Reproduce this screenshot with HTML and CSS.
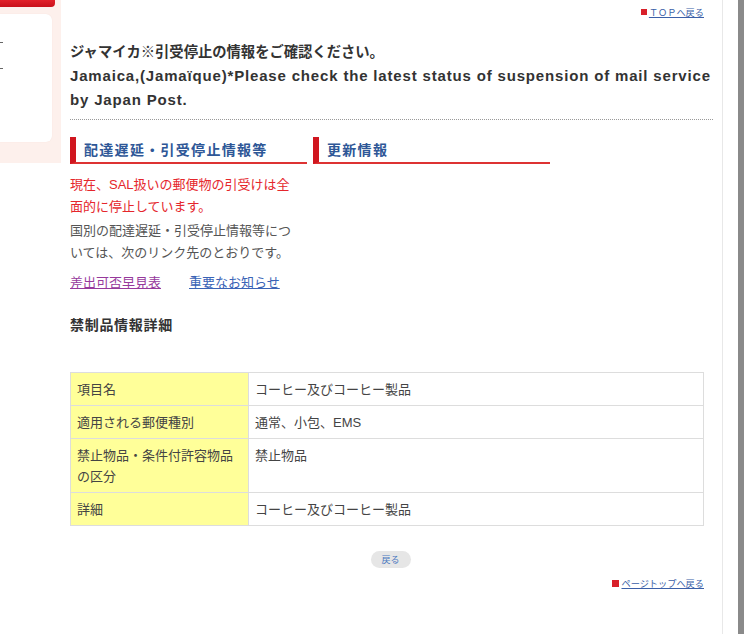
FILE: index.html
```html
<!DOCTYPE html>
<html lang="ja">
<head>
<meta charset="utf-8">
<title>ジャマイカ 禁制品情報</title>
<link rel="stylesheet" href="styles.css">
</head>
<body>
<div class="page">
  <aside class="sidebar">
    <div class="side-bar-red"></div>
    <div class="side-box">
      <span class="cut-mark"></span>
      <span class="cut-mark"></span>
    </div>
  </aside>
  <main class="main">
    <div class="toplink-row"><a class="toplink" href="#"><span class="sq"></span>ＴＯＰへ戻る</a></div>
    <h1 class="title">ジャマイカ※引受停止の情報をご確認ください。<br><span class="title-en">Jamaica,(Jamaïque)*Please check the latest status of suspension of mail service by Japan Post.</span></h1>
    <div class="dotted"></div>
    <div class="cols">
      <section class="col">
        <h2 class="sec-head">配達遅延・引受停止情報等</h2>
        <p class="red-text">現在、SAL扱いの郵便物の引受けは全面的に停止しています。</p>
        <p class="gray-text">国別の配達遅延・引受停止情報等については、次のリンク先のとおりです。</p>
        <div class="links">
          <a class="visited" href="#">差出可否早見表</a>
          <a class="link" href="#">重要なお知らせ</a>
        </div>
      </section>
      <section class="col">
        <h2 class="sec-head">更新情報</h2>
      </section>
    </div>
    <h3 class="detail-head">禁制品情報詳細</h3>
    <table class="info">
      <tr><th>項目名</th><td>コーヒー及びコーヒー製品</td></tr>
      <tr><th>適用される郵便種別</th><td>通常、小包、EMS</td></tr>
      <tr><th>禁止物品・条件付許容物品の区分</th><td>禁止物品</td></tr>
      <tr><th>詳細</th><td>コーヒー及びコーヒー製品</td></tr>
    </table>
    <div class="back-row"><button class="back">戻る</button></div>
    <div class="pagetop-row"><a class="pagetop" href="#"><span class="sq sq2"></span>ページトップへ戻る</a></div>
  </main>
  <div class="scroll"></div>
</div>
</body>
</html>
```
FILE: styles.css
```css
html, body {
  margin: 0;
  padding: 0;
  background: #fff;
}
body {
  font-family: "Liberation Sans", "Noto Sans CJK JP", sans-serif;
  color: #444;
}
.page {
  display: flex;
  width: 750px;
  height: 634px;
  overflow: hidden;
}
.sidebar {
  width: 61px;
  height: 163px;
  background: #fdf0ec;
  flex: none;
}
.side-bar-red {
  width: 55px;
  height: 7px;
  background: linear-gradient(#e2202a, #c8101a);
  border-bottom-right-radius: 4px;
}
.side-box {
  width: 52px;
  height: 128px;
  margin-top: 7px;
  background: #fff;
  border-radius: 0 6px 6px 0;
  box-shadow: 0 0 1px #f2d8d2;
  display: flex;
  flex-direction: column;
  padding-top: 28px;
  gap: 25px;
  box-sizing: border-box;
}
.cut-mark {
  display: block;
  width: 3px;
  height: 1px;
  background: #666;
}
.main {
  width: 643px;
  padding: 0 9px 0 9px;
  border-right: 1px solid #e8e8e8;
  flex: none;
}
.scroll {
  width: 6px;
  margin-left: 15px;
  background: #8a8a8a;
  flex: none;
}
.toplink-row {
  display: flex;
  justify-content: flex-end;
  padding: 4px 9px 0 0;
  height: 16px;
}
.toplink, .pagetop {
  font-family: "Noto Sans CJK JP", sans-serif;
  font-size: 9.2px;
  color: #3b5fa8;
  text-decoration: underline;
  display: flex;
  align-items: center;
  line-height: 12px;
}
.sq {
  display: inline-block;
  width: 6px;
  height: 6px;
  background: #d8202a;
  margin-right: 2px;
}
.sq2 {
  width: 7px;
  height: 7px;
}
.title {
  margin: 20px 0 0 0;
  font-size: 14.3px;
  line-height: 24px;
  font-weight: bold;
  color: #333;
}
.title-en {
  font-size: 15px;
  letter-spacing: 0.83px;
}
.dotted {
  margin-top: 7px;
  border-top: 1px dotted #999;
}
.cols {
  display: flex;
  gap: 6px;
  margin-top: 17px;
}
.col {
  width: 237px;
}
.sec-head {
  margin: 0;
  height: 25px;
  line-height: 24px;
  padding-left: 8px;
  font-family: "Noto Sans CJK JP", sans-serif;
  font-size: 14px;
  letter-spacing: 1.3px;
  font-weight: bold;
  color: #2e5797;
  border-left: 6px solid #d0161f;
  border-bottom: 2px solid #d33;
}
.red-text, .gray-text {
  width: 230px;
  font-size: 13px;
  line-height: 21.5px;
  margin: 0;
}
.red-text {
  margin-top: 10px;
  color: #e5262c;
}
.gray-text {
  margin-top: 3px;
  color: #555;
}
.links {
  display: flex;
  gap: 28px;
  margin-top: 10px;
  font-size: 13px;
  line-height: 20px;
}
.visited {
  color: #96399c;
}
.link {
  color: #3a63b6;
}
.detail-head {
  margin: 21px 0 0 0;
  font-size: 14px;
  letter-spacing: 0.7px;
  line-height: 22px;
  font-weight: bold;
  color: #333;
}
.info {
  margin-top: 36px;
  width: 634px;
  border-collapse: collapse;
  font-size: 13px;
  line-height: 21px;
  color: #444;
}
.info th, .info td {
  border: 1px solid #ddd;
  padding: 6px 7px 5px 6px;
  vertical-align: top;
  text-align: left;
  font-weight: normal;
}
.info th {
  width: 164px;
  background: #ffff99;
}
.back-row {
  display: flex;
  justify-content: center;
  margin-top: 25px;
  padding-right: 2px;
}
.back {
  width: 40px;
  height: 17px;
  border: none;
  border-radius: 9px;
  background: #e6e6e6;
  color: #4a78c0;
  font-family: "Noto Sans CJK JP", sans-serif;
  font-size: 9px;
  padding: 0;
  line-height: 17px;
}
.pagetop-row {
  display: flex;
  justify-content: flex-end;
  padding-right: 9px;
  margin-top: 9px;
}
```
